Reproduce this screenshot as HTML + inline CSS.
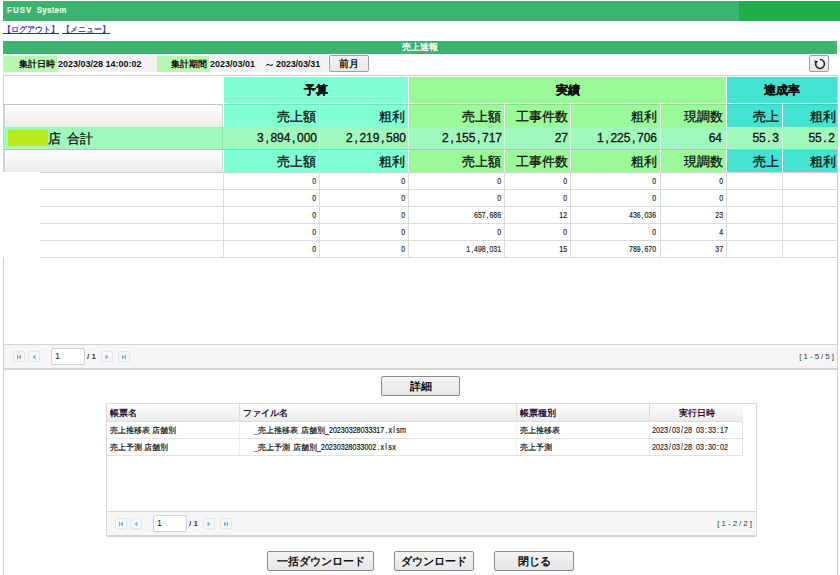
<!DOCTYPE html>
<html><head><meta charset="utf-8"><style>
html,body{margin:0;padding:0;background:#fff;width:840px;height:575px;overflow:hidden;position:relative;font-family:"Liberation Sans",sans-serif;color:#222}
.a{position:absolute;box-sizing:border-box;white-space:nowrap}
.lnk{font-size:8px;color:#2a2acc;text-decoration:underline;-webkit-text-stroke:0.2px #2a2acc}
.lab{background:#b6f7b2;font-size:9px;font-weight:bold;text-align:right;padding-right:2px;color:#111}
.val{font-size:9px;font-weight:bold;padding-left:1px;color:#111;background:#f3f3f3}
.btn{border:1px solid #8c8c8c;border-radius:2px;background:linear-gradient(#f4f4f4,#e6e6e6);font-weight:bold;text-align:center;color:#111}
.hd{font-size:11.5px;font-weight:bold;text-align:center;color:#111;-webkit-text-stroke:0.35px #111}
.sh{font-size:13px;text-align:right;color:#111;-webkit-text-stroke:0.3px #111}

.g{background:linear-gradient(#ffffff,#ebebeb)}
.m{display:inline-block;white-space:nowrap}
.m i{display:inline-block;font-style:normal;text-align:center}
.pb{border:1px solid #e6e6e6;border-radius:2px;background:#f7f7f7}
</style></head><body>
<div class="a " style="left:3px;top:1px;width:834px;height:20px;background:#3cb371"></div>
<div class="a " style="left:739px;top:1px;width:101px;height:20px;background:#22ad4a"></div>
<div class="a " style="left:7px;top:5px;font-size:9px;font-weight:bold;color:#e6ffe6;line-height:11px;-webkit-text-stroke:0.15px #e6ffe6;transform:scaleX(0.88);transform-origin:0 50%"><span style="letter-spacing:1.2px">FUSV</span><span style="margin-left:5px;letter-spacing:0.3px">System</span></div>
<div class="a lnk" style="left:3px;top:25px;line-height:10px">【ログアウト】</div>
<div class="a lnk" style="left:62px;top:25px;line-height:10px">【メニュー】</div>
<div class="a " style="left:3px;top:41px;width:834px;height:13px;background:#3cb371;color:#fff;font-size:9px;font-weight:bold;text-align:center;line-height:13px">売上速報</div>
<div class="a lab" style="left:3px;top:56px;width:54px;height:16px;line-height:16px">集計日時</div>
<div class="a val" style="left:57px;top:56px;width:100px;height:16px;line-height:16px">2023/03/28 14:00:02</div>
<div class="a lab" style="left:157px;top:56px;width:52px;height:16px;line-height:16px">集計期間</div>
<div class="a val" style="left:209px;top:56px;width:53px;height:16px;line-height:16px">2023/03/01</div>
<div class="a val" style="left:262px;top:56px;width:66px;height:16px;line-height:16px;border-left:1px solid #fafafa"><span style="position:absolute;left:1px;top:0;font-weight:normal;font-size:11px;-webkit-text-stroke:0.2px #111">～</span><span style="position:absolute;left:13px;top:0;letter-spacing:-0.1px">2023/03/31</span></div>
<div class="a btn" style="left:329px;top:55px;width:40px;height:17px;font-size:9.5px;line-height:16px;border-color:#a0a0a0">前月</div>
<div class="a btn" style="left:809px;top:55px;width:20px;height:17px;border-color:#a0a0a0"><svg width="20" height="17" viewBox="0 0 20 17" style="position:absolute;left:-1px;top:-1px"><path d="M11 4.6 A4.4 4.4 0 1 1 7.2 6.9" fill="none" stroke="#2a2a2a" stroke-width="1.5"/><path d="M5.2 5.6 L9.2 6.3 L6.3 9.3 Z" fill="#2a2a2a"/></svg></div>
<div class="a " style="left:3px;top:75px;width:835px;height:520px;border:1px solid #cfcfcf;border-bottom:none"></div>
<div class="a " style="left:4px;top:104px;width:219px;height:1px;background:#c4c4c4"></div>
<div class="a g" style="left:4px;top:105px;width:219px;height:22px;border-left:1px solid #d6d6d6;border-right:1px solid #d6d6d6"></div>
<div class="a hd" style="left:224px;top:77px;width:184px;height:26px;background:#80ffd4;line-height:26px">予算</div>
<div class="a hd" style="left:409px;top:77px;width:317px;height:26px;background:#99fa97;line-height:26px">実績</div>
<div class="a hd" style="left:727px;top:77px;width:110px;height:26px;background:#44e2d0;line-height:26px">達成率</div>
<div class="a sh" style="left:224px;top:104px;width:95px;height:23px;background:#80ffd4;line-height:25px;padding-right:3px">売上額</div>
<div class="a sh" style="left:320px;top:104px;width:88px;height:23px;background:#80ffd4;line-height:25px;padding-right:3px">粗利</div>
<div class="a sh" style="left:409px;top:104px;width:95px;height:23px;background:#99fa97;line-height:25px;padding-right:3px">売上額</div>
<div class="a sh" style="left:505px;top:104px;width:65px;height:23px;background:#99fa97;line-height:25px;padding-right:2px">工事件数</div>
<div class="a sh" style="left:571px;top:104px;width:89px;height:23px;background:#99fa97;line-height:25px;padding-right:3px">粗利</div>
<div class="a sh" style="left:661px;top:104px;width:65px;height:23px;background:#99fa97;line-height:25px;padding-right:3px">現調数</div>
<div class="a sh" style="left:727px;top:104px;width:55px;height:23px;background:#44e2d0;line-height:25px;padding-right:3px">売上</div>
<div class="a sh" style="left:783px;top:104px;width:54px;height:23px;background:#44e2d0;line-height:25px;padding-right:1px">粗利</div>
<div class="a sh" style="left:224px;top:150px;width:95px;height:22px;background:#80ffd4;line-height:24px;padding-right:3px">売上額</div>
<div class="a sh" style="left:320px;top:150px;width:88px;height:22px;background:#80ffd4;line-height:24px;padding-right:3px">粗利</div>
<div class="a sh" style="left:409px;top:150px;width:95px;height:22px;background:#99fa97;line-height:24px;padding-right:3px">売上額</div>
<div class="a sh" style="left:505px;top:150px;width:65px;height:22px;background:#99fa97;line-height:24px;padding-right:2px">工事件数</div>
<div class="a sh" style="left:571px;top:150px;width:89px;height:22px;background:#99fa97;line-height:24px;padding-right:3px">粗利</div>
<div class="a sh" style="left:661px;top:150px;width:65px;height:22px;background:#99fa97;line-height:24px;padding-right:3px">現調数</div>
<div class="a sh" style="left:727px;top:150px;width:55px;height:22px;background:#44e2d0;line-height:24px;padding-right:3px">売上</div>
<div class="a sh" style="left:783px;top:150px;width:54px;height:22px;background:#44e2d0;line-height:24px;padding-right:1px">粗利</div>
<div class="a " style="left:224px;top:104px;width:613px;height:1px;background:rgba(0,0,0,0.10)"></div>
<div class="a " style="left:4px;top:127px;width:833px;height:22px;background:#a0f9bc"></div>
<div class="a " style="left:4px;top:149px;width:833px;height:1px;background:#bdbdbd"></div>
<div class="a " style="left:8px;top:130px;width:40px;height:16px;background:#b9ec16"></div>
<div class="a " style="left:319px;top:127px;width:1px;height:22px;background:rgba(255,255,255,0.45)"></div>
<div class="a " style="left:408px;top:127px;width:1px;height:22px;background:rgba(255,255,255,0.45)"></div>
<div class="a " style="left:504px;top:127px;width:1px;height:22px;background:rgba(255,255,255,0.45)"></div>
<div class="a " style="left:570px;top:127px;width:1px;height:22px;background:rgba(255,255,255,0.45)"></div>
<div class="a " style="left:660px;top:127px;width:1px;height:22px;background:rgba(255,255,255,0.45)"></div>
<div class="a " style="left:726px;top:127px;width:1px;height:22px;background:rgba(255,255,255,0.45)"></div>
<div class="a " style="left:782px;top:127px;width:1px;height:22px;background:rgba(255,255,255,0.45)"></div>
<div class="a " style="left:222px;top:127px;width:1px;height:22px;background:rgba(0,0,0,0.08)"></div>
<div class="a " style="left:48px;top:128px;font-size:13px;line-height:22px;color:#111;-webkit-text-stroke:0.3px #111">店<span style="display:inline-block;width:5.5px"></span>合計</div>
<div class="a " style="left:224px;top:127px;width:95px;height:22px;line-height:22px;font-size:12px;text-align:right;color:#111;-webkit-text-stroke:0.3px #111;padding-right:2px"><span class="m" style="font-size:12px;transform:scaleX(1.0);transform-origin:100% 50%;"><i style="width:6.67px">3</i><i style="width:6.67px">,</i><i style="width:6.67px">8</i><i style="width:6.67px">9</i><i style="width:6.67px">4</i><i style="width:6.67px">,</i><i style="width:6.67px">0</i><i style="width:6.67px">0</i><i style="width:6.67px">0</i></span></div>
<div class="a " style="left:320px;top:127px;width:88px;height:22px;line-height:22px;font-size:12px;text-align:right;color:#111;-webkit-text-stroke:0.3px #111;padding-right:2px"><span class="m" style="font-size:12px;transform:scaleX(1.0);transform-origin:100% 50%;"><i style="width:6.67px">2</i><i style="width:6.67px">,</i><i style="width:6.67px">2</i><i style="width:6.67px">1</i><i style="width:6.67px">9</i><i style="width:6.67px">,</i><i style="width:6.67px">5</i><i style="width:6.67px">8</i><i style="width:6.67px">0</i></span></div>
<div class="a " style="left:409px;top:127px;width:95px;height:22px;line-height:22px;font-size:12px;text-align:right;color:#111;-webkit-text-stroke:0.3px #111;padding-right:2px"><span class="m" style="font-size:12px;transform:scaleX(1.0);transform-origin:100% 50%;"><i style="width:6.67px">2</i><i style="width:6.67px">,</i><i style="width:6.67px">1</i><i style="width:6.67px">5</i><i style="width:6.67px">5</i><i style="width:6.67px">,</i><i style="width:6.67px">7</i><i style="width:6.67px">1</i><i style="width:6.67px">7</i></span></div>
<div class="a " style="left:505px;top:127px;width:65px;height:22px;line-height:22px;font-size:12px;text-align:right;color:#111;-webkit-text-stroke:0.3px #111;padding-right:2px"><span class="m" style="font-size:12px;transform:scaleX(1.0);transform-origin:100% 50%;"><i style="width:6.67px">2</i><i style="width:6.67px">7</i></span></div>
<div class="a " style="left:571px;top:127px;width:89px;height:22px;line-height:22px;font-size:12px;text-align:right;color:#111;-webkit-text-stroke:0.3px #111;padding-right:3px"><span class="m" style="font-size:12px;transform:scaleX(1.0);transform-origin:100% 50%;"><i style="width:6.67px">1</i><i style="width:6.67px">,</i><i style="width:6.67px">2</i><i style="width:6.67px">2</i><i style="width:6.67px">5</i><i style="width:6.67px">,</i><i style="width:6.67px">7</i><i style="width:6.67px">0</i><i style="width:6.67px">6</i></span></div>
<div class="a " style="left:661px;top:127px;width:65px;height:22px;line-height:22px;font-size:12px;text-align:right;color:#111;-webkit-text-stroke:0.3px #111;padding-right:4px"><span class="m" style="font-size:12px;transform:scaleX(1.0);transform-origin:100% 50%;"><i style="width:6.67px">6</i><i style="width:6.67px">4</i></span></div>
<div class="a " style="left:727px;top:127px;width:55px;height:22px;line-height:22px;font-size:12px;text-align:right;color:#111;-webkit-text-stroke:0.3px #111;padding-right:3px"><span class="m" style="font-size:12px;transform:scaleX(1.0);transform-origin:100% 50%;"><i style="width:6.67px">5</i><i style="width:6.67px">5</i><i style="width:6.67px">.</i><i style="width:6.67px">3</i></span></div>
<div class="a " style="left:783px;top:127px;width:54px;height:22px;line-height:22px;font-size:12px;text-align:right;color:#111;-webkit-text-stroke:0.3px #111;padding-right:2px"><span class="m" style="font-size:12px;transform:scaleX(1.0);transform-origin:100% 50%;"><i style="width:6.67px">5</i><i style="width:6.67px">5</i><i style="width:6.67px">.</i><i style="width:6.67px">2</i></span></div>
<div class="a g" style="left:4px;top:150px;width:219px;height:22px;border-left:1px solid #d6d6d6;border-right:1px solid #d6d6d6"></div>
<div class="a " style="left:4px;top:172px;width:833px;height:1px;background:#cfcfcf"></div>
<div class="a " style="left:40px;top:189px;width:797px;height:1px;background:#dcdcdc"></div>
<div class="a " style="left:224px;top:173px;width:95px;height:16px;line-height:17px;font-size:9px;text-align:right;padding-right:3px;color:#222;-webkit-text-stroke:0.2px #222"><span class="m" style="font-size:9px;transform:scaleX(0.77);transform-origin:100% 50%;"><i style="width:5px">0</i></span></div>
<div class="a " style="left:320px;top:173px;width:88px;height:16px;line-height:17px;font-size:9px;text-align:right;padding-right:3px;color:#222;-webkit-text-stroke:0.2px #222"><span class="m" style="font-size:9px;transform:scaleX(0.77);transform-origin:100% 50%;"><i style="width:5px">0</i></span></div>
<div class="a " style="left:409px;top:173px;width:95px;height:16px;line-height:17px;font-size:9px;text-align:right;padding-right:3px;color:#222;-webkit-text-stroke:0.2px #222"><span class="m" style="font-size:9px;transform:scaleX(0.77);transform-origin:100% 50%;"><i style="width:5px">0</i></span></div>
<div class="a " style="left:505px;top:173px;width:65px;height:16px;line-height:17px;font-size:9px;text-align:right;padding-right:3px;color:#222;-webkit-text-stroke:0.2px #222"><span class="m" style="font-size:9px;transform:scaleX(0.77);transform-origin:100% 50%;"><i style="width:5px">0</i></span></div>
<div class="a " style="left:571px;top:173px;width:89px;height:16px;line-height:17px;font-size:9px;text-align:right;padding-right:4px;color:#222;-webkit-text-stroke:0.2px #222"><span class="m" style="font-size:9px;transform:scaleX(0.77);transform-origin:100% 50%;"><i style="width:5px">0</i></span></div>
<div class="a " style="left:661px;top:173px;width:65px;height:16px;line-height:17px;font-size:9px;text-align:right;padding-right:3px;color:#222;-webkit-text-stroke:0.2px #222"><span class="m" style="font-size:9px;transform:scaleX(0.77);transform-origin:100% 50%;"><i style="width:5px">0</i></span></div>
<div class="a " style="left:40px;top:206px;width:797px;height:1px;background:#dcdcdc"></div>
<div class="a " style="left:224px;top:190px;width:95px;height:16px;line-height:17px;font-size:9px;text-align:right;padding-right:3px;color:#222;-webkit-text-stroke:0.2px #222"><span class="m" style="font-size:9px;transform:scaleX(0.77);transform-origin:100% 50%;"><i style="width:5px">0</i></span></div>
<div class="a " style="left:320px;top:190px;width:88px;height:16px;line-height:17px;font-size:9px;text-align:right;padding-right:3px;color:#222;-webkit-text-stroke:0.2px #222"><span class="m" style="font-size:9px;transform:scaleX(0.77);transform-origin:100% 50%;"><i style="width:5px">0</i></span></div>
<div class="a " style="left:409px;top:190px;width:95px;height:16px;line-height:17px;font-size:9px;text-align:right;padding-right:3px;color:#222;-webkit-text-stroke:0.2px #222"><span class="m" style="font-size:9px;transform:scaleX(0.77);transform-origin:100% 50%;"><i style="width:5px">0</i></span></div>
<div class="a " style="left:505px;top:190px;width:65px;height:16px;line-height:17px;font-size:9px;text-align:right;padding-right:3px;color:#222;-webkit-text-stroke:0.2px #222"><span class="m" style="font-size:9px;transform:scaleX(0.77);transform-origin:100% 50%;"><i style="width:5px">0</i></span></div>
<div class="a " style="left:571px;top:190px;width:89px;height:16px;line-height:17px;font-size:9px;text-align:right;padding-right:4px;color:#222;-webkit-text-stroke:0.2px #222"><span class="m" style="font-size:9px;transform:scaleX(0.77);transform-origin:100% 50%;"><i style="width:5px">0</i></span></div>
<div class="a " style="left:661px;top:190px;width:65px;height:16px;line-height:17px;font-size:9px;text-align:right;padding-right:3px;color:#222;-webkit-text-stroke:0.2px #222"><span class="m" style="font-size:9px;transform:scaleX(0.77);transform-origin:100% 50%;"><i style="width:5px">0</i></span></div>
<div class="a " style="left:40px;top:223px;width:797px;height:1px;background:#dcdcdc"></div>
<div class="a " style="left:224px;top:207px;width:95px;height:16px;line-height:17px;font-size:9px;text-align:right;padding-right:3px;color:#222;-webkit-text-stroke:0.2px #222"><span class="m" style="font-size:9px;transform:scaleX(0.77);transform-origin:100% 50%;"><i style="width:5px">0</i></span></div>
<div class="a " style="left:320px;top:207px;width:88px;height:16px;line-height:17px;font-size:9px;text-align:right;padding-right:3px;color:#222;-webkit-text-stroke:0.2px #222"><span class="m" style="font-size:9px;transform:scaleX(0.77);transform-origin:100% 50%;"><i style="width:5px">0</i></span></div>
<div class="a " style="left:409px;top:207px;width:95px;height:16px;line-height:17px;font-size:9px;text-align:right;padding-right:3px;color:#222;-webkit-text-stroke:0.2px #222"><span class="m" style="font-size:9px;transform:scaleX(0.77);transform-origin:100% 50%;"><i style="width:5px">6</i><i style="width:5px">5</i><i style="width:5px">7</i><i style="width:5px">,</i><i style="width:5px">6</i><i style="width:5px">8</i><i style="width:5px">6</i></span></div>
<div class="a " style="left:505px;top:207px;width:65px;height:16px;line-height:17px;font-size:9px;text-align:right;padding-right:3px;color:#222;-webkit-text-stroke:0.2px #222"><span class="m" style="font-size:9px;transform:scaleX(0.77);transform-origin:100% 50%;"><i style="width:5px">1</i><i style="width:5px">2</i></span></div>
<div class="a " style="left:571px;top:207px;width:89px;height:16px;line-height:17px;font-size:9px;text-align:right;padding-right:4px;color:#222;-webkit-text-stroke:0.2px #222"><span class="m" style="font-size:9px;transform:scaleX(0.77);transform-origin:100% 50%;"><i style="width:5px">4</i><i style="width:5px">3</i><i style="width:5px">6</i><i style="width:5px">,</i><i style="width:5px">0</i><i style="width:5px">3</i><i style="width:5px">6</i></span></div>
<div class="a " style="left:661px;top:207px;width:65px;height:16px;line-height:17px;font-size:9px;text-align:right;padding-right:3px;color:#222;-webkit-text-stroke:0.2px #222"><span class="m" style="font-size:9px;transform:scaleX(0.77);transform-origin:100% 50%;"><i style="width:5px">2</i><i style="width:5px">3</i></span></div>
<div class="a " style="left:40px;top:240px;width:797px;height:1px;background:#dcdcdc"></div>
<div class="a " style="left:224px;top:224px;width:95px;height:16px;line-height:17px;font-size:9px;text-align:right;padding-right:3px;color:#222;-webkit-text-stroke:0.2px #222"><span class="m" style="font-size:9px;transform:scaleX(0.77);transform-origin:100% 50%;"><i style="width:5px">0</i></span></div>
<div class="a " style="left:320px;top:224px;width:88px;height:16px;line-height:17px;font-size:9px;text-align:right;padding-right:3px;color:#222;-webkit-text-stroke:0.2px #222"><span class="m" style="font-size:9px;transform:scaleX(0.77);transform-origin:100% 50%;"><i style="width:5px">0</i></span></div>
<div class="a " style="left:409px;top:224px;width:95px;height:16px;line-height:17px;font-size:9px;text-align:right;padding-right:3px;color:#222;-webkit-text-stroke:0.2px #222"><span class="m" style="font-size:9px;transform:scaleX(0.77);transform-origin:100% 50%;"><i style="width:5px">0</i></span></div>
<div class="a " style="left:505px;top:224px;width:65px;height:16px;line-height:17px;font-size:9px;text-align:right;padding-right:3px;color:#222;-webkit-text-stroke:0.2px #222"><span class="m" style="font-size:9px;transform:scaleX(0.77);transform-origin:100% 50%;"><i style="width:5px">0</i></span></div>
<div class="a " style="left:571px;top:224px;width:89px;height:16px;line-height:17px;font-size:9px;text-align:right;padding-right:4px;color:#222;-webkit-text-stroke:0.2px #222"><span class="m" style="font-size:9px;transform:scaleX(0.77);transform-origin:100% 50%;"><i style="width:5px">0</i></span></div>
<div class="a " style="left:661px;top:224px;width:65px;height:16px;line-height:17px;font-size:9px;text-align:right;padding-right:3px;color:#222;-webkit-text-stroke:0.2px #222"><span class="m" style="font-size:9px;transform:scaleX(0.77);transform-origin:100% 50%;"><i style="width:5px">4</i></span></div>
<div class="a " style="left:40px;top:257px;width:797px;height:1px;background:#dcdcdc"></div>
<div class="a " style="left:224px;top:241px;width:95px;height:16px;line-height:17px;font-size:9px;text-align:right;padding-right:3px;color:#222;-webkit-text-stroke:0.2px #222"><span class="m" style="font-size:9px;transform:scaleX(0.77);transform-origin:100% 50%;"><i style="width:5px">0</i></span></div>
<div class="a " style="left:320px;top:241px;width:88px;height:16px;line-height:17px;font-size:9px;text-align:right;padding-right:3px;color:#222;-webkit-text-stroke:0.2px #222"><span class="m" style="font-size:9px;transform:scaleX(0.77);transform-origin:100% 50%;"><i style="width:5px">0</i></span></div>
<div class="a " style="left:409px;top:241px;width:95px;height:16px;line-height:17px;font-size:9px;text-align:right;padding-right:3px;color:#222;-webkit-text-stroke:0.2px #222"><span class="m" style="font-size:9px;transform:scaleX(0.77);transform-origin:100% 50%;"><i style="width:5px">1</i><i style="width:5px">,</i><i style="width:5px">4</i><i style="width:5px">9</i><i style="width:5px">8</i><i style="width:5px">,</i><i style="width:5px">0</i><i style="width:5px">3</i><i style="width:5px">1</i></span></div>
<div class="a " style="left:505px;top:241px;width:65px;height:16px;line-height:17px;font-size:9px;text-align:right;padding-right:3px;color:#222;-webkit-text-stroke:0.2px #222"><span class="m" style="font-size:9px;transform:scaleX(0.77);transform-origin:100% 50%;"><i style="width:5px">1</i><i style="width:5px">5</i></span></div>
<div class="a " style="left:571px;top:241px;width:89px;height:16px;line-height:17px;font-size:9px;text-align:right;padding-right:4px;color:#222;-webkit-text-stroke:0.2px #222"><span class="m" style="font-size:9px;transform:scaleX(0.77);transform-origin:100% 50%;"><i style="width:5px">7</i><i style="width:5px">8</i><i style="width:5px">9</i><i style="width:5px">,</i><i style="width:5px">6</i><i style="width:5px">7</i><i style="width:5px">0</i></span></div>
<div class="a " style="left:661px;top:241px;width:65px;height:16px;line-height:17px;font-size:9px;text-align:right;padding-right:3px;color:#222;-webkit-text-stroke:0.2px #222"><span class="m" style="font-size:9px;transform:scaleX(0.77);transform-origin:100% 50%;"><i style="width:5px">3</i><i style="width:5px">7</i></span></div>
<div class="a " style="left:223px;top:172px;width:1px;height:85px;background:#dcdcdc"></div>
<div class="a " style="left:319px;top:172px;width:1px;height:85px;background:#dcdcdc"></div>
<div class="a " style="left:408px;top:172px;width:1px;height:85px;background:#dcdcdc"></div>
<div class="a " style="left:504px;top:172px;width:1px;height:85px;background:#dcdcdc"></div>
<div class="a " style="left:570px;top:172px;width:1px;height:85px;background:#dcdcdc"></div>
<div class="a " style="left:660px;top:172px;width:1px;height:85px;background:#dcdcdc"></div>
<div class="a " style="left:726px;top:172px;width:1px;height:85px;background:#dcdcdc"></div>
<div class="a " style="left:782px;top:172px;width:1px;height:85px;background:#dcdcdc"></div>
<div class="a " style="left:0px;top:172px;width:40px;height:85px;background:#fff"></div>
<div class="a " style="left:4px;top:344px;width:833px;height:26px;background:#f6f6f6;border-top:1px solid #d4d4d4;border-bottom:2px solid #d4d4d4"></div>
<div class="a pb" style="left:13px;top:351px;width:12px;height:11px"><svg width="12" height="11" viewBox="0 0 12 11" style="position:absolute;left:-1px;top:-1px"><path d="M4.5 3.5v5" stroke="#7fb2da" stroke-width="1"/><path d="M8 3.5 L5 6 L8 8.5 Z" fill="#7fb2da"/></svg></div>
<div class="a pb" style="left:28px;top:351px;width:12px;height:11px"><svg width="12" height="11" viewBox="0 0 12 11" style="position:absolute;left:-1px;top:-1px"><path d="M7.5 3.5 L4.5 6 L7.5 8.5 Z" fill="#7fb2da"/></svg></div>
<div class="a " style="left:51px;top:348px;width:34px;height:17px;border:1px solid #d2d2d2;border-radius:2px;background:#fff;font-size:9px;line-height:15px;padding-left:3px;color:#222">1</div>
<div class="a " style="left:87px;top:349px;font-size:8px;font-weight:bold;line-height:15px;color:#503838">/ 1</div>
<div class="a pb" style="left:101px;top:351px;width:12px;height:11px"><svg width="12" height="11" viewBox="0 0 12 11" style="position:absolute;left:-1px;top:-1px"><path d="M4.5 3.5 L7.5 6 L4.5 8.5 Z" fill="#7fb2da"/></svg></div>
<div class="a pb" style="left:118px;top:351px;width:12px;height:11px"><svg width="12" height="11" viewBox="0 0 12 11" style="position:absolute;left:-1px;top:-1px"><path d="M7.5 3.5v5" stroke="#7fb2da" stroke-width="1"/><path d="M4 3.5 L7 6 L4 8.5 Z" fill="#7fb2da"/></svg></div>
<div class="a " style="left:776px;top:349px;width:60px;text-align:right;font-size:8px;line-height:15px;letter-spacing:2px;color:#3a3a3a">[1-5/5]</div>
<div class="a btn" style="left:381px;top:376px;width:79px;height:20px;font-size:11px;line-height:18px">詳細</div>
<div class="a " style="left:106px;top:403px;width:651px;height:133px;border:1px solid #dadada;background:#fff"></div>
<div class="a g" style="left:107px;top:404px;width:636px;height:18px;border-bottom:1px solid #dedede"></div>
<div class="a " style="left:239px;top:404px;width:1px;height:17px;background:#dcdcdc"></div>
<div class="a " style="left:239px;top:421px;width:1px;height:34px;background:#f0f0f0"></div>
<div class="a " style="left:516px;top:404px;width:1px;height:17px;background:#dcdcdc"></div>
<div class="a " style="left:516px;top:421px;width:1px;height:34px;background:#f0f0f0"></div>
<div class="a " style="left:649px;top:404px;width:1px;height:17px;background:#dcdcdc"></div>
<div class="a " style="left:649px;top:421px;width:1px;height:34px;background:#f0f0f0"></div>
<div class="a " style="left:742px;top:421px;width:1px;height:34px;background:#e6e6e6"></div>
<div class="a " style="left:107px;top:405px;width:133px;height:17px;line-height:17px;font-size:8.5px;font-weight:bold;color:#2a1030;text-align:left;padding-left:3px">帳票名</div>
<div class="a " style="left:240px;top:405px;width:277px;height:17px;line-height:17px;font-size:8.5px;font-weight:bold;color:#2a1030;text-align:left;padding-left:3px">ファイル名</div>
<div class="a " style="left:517px;top:405px;width:133px;height:17px;line-height:17px;font-size:8.5px;font-weight:bold;color:#2a1030;text-align:left;padding-left:3px">帳票種別</div>
<div class="a " style="left:650px;top:405px;width:93px;height:17px;line-height:17px;font-size:8.5px;font-weight:bold;color:#2a1030;text-align:center;padding-left:0px">実行日時</div>
<div class="a " style="left:107px;top:438px;width:636px;height:1px;background:#e2e2e2"></div>
<div class="a " style="left:110px;top:422px;line-height:17px;font-size:8px;color:#111;-webkit-text-stroke:0.2px #111">売上推移表 店舗別</div>
<div class="a " style="left:254px;top:422px;line-height:17px;font-size:8px;color:#111;-webkit-text-stroke:0.2px #111">_売上推移表 店舗別<span class="m" style="font-size:9px;transform:scaleX(0.79);transform-origin:0 50%;vertical-align:top"><i style="width:5px">_</i><i style="width:5px">2</i><i style="width:5px">0</i><i style="width:5px">2</i><i style="width:5px">3</i><i style="width:5px">0</i><i style="width:5px">3</i><i style="width:5px">2</i><i style="width:5px">8</i><i style="width:5px">0</i><i style="width:5px">3</i><i style="width:5px">3</i><i style="width:5px">3</i><i style="width:5px">1</i><i style="width:5px">7</i><i style="width:5px">.</i><i style="width:5px">x</i><i style="width:5px">l</i><i style="width:5px">s</i><i style="width:5px">m</i></span></div>
<div class="a " style="left:520px;top:422px;line-height:17px;font-size:8px;color:#111;-webkit-text-stroke:0.2px #111">売上推移表</div>
<div class="a " style="left:652px;top:422px;line-height:17px;font-size:9px;color:#222;-webkit-text-stroke:0.15px #222"><span class="m" style="font-size:9px;transform:scaleX(0.8);transform-origin:0 50%;"><i style="width:5px">2</i><i style="width:5px">0</i><i style="width:5px">2</i><i style="width:5px">3</i><i style="width:5px">/</i><i style="width:5px">0</i><i style="width:5px">3</i><i style="width:5px">/</i><i style="width:5px">2</i><i style="width:5px">8</i><i style="width:5px">&nbsp;</i><i style="width:5px">0</i><i style="width:5px">3</i><i style="width:5px">:</i><i style="width:5px">3</i><i style="width:5px">3</i><i style="width:5px">:</i><i style="width:5px">1</i><i style="width:5px">7</i></span></div>
<div class="a " style="left:107px;top:455px;width:636px;height:1px;background:#e2e2e2"></div>
<div class="a " style="left:110px;top:439px;line-height:17px;font-size:8px;color:#111;-webkit-text-stroke:0.2px #111">売上予測 店舗別</div>
<div class="a " style="left:254px;top:439px;line-height:17px;font-size:8px;color:#111;-webkit-text-stroke:0.2px #111">_売上予測 店舗別<span class="m" style="font-size:9px;transform:scaleX(0.79);transform-origin:0 50%;vertical-align:top"><i style="width:5px">_</i><i style="width:5px">2</i><i style="width:5px">0</i><i style="width:5px">2</i><i style="width:5px">3</i><i style="width:5px">0</i><i style="width:5px">3</i><i style="width:5px">2</i><i style="width:5px">8</i><i style="width:5px">0</i><i style="width:5px">3</i><i style="width:5px">3</i><i style="width:5px">0</i><i style="width:5px">0</i><i style="width:5px">2</i><i style="width:5px">.</i><i style="width:5px">x</i><i style="width:5px">l</i><i style="width:5px">s</i><i style="width:5px">x</i></span></div>
<div class="a " style="left:520px;top:439px;line-height:17px;font-size:8px;color:#111;-webkit-text-stroke:0.2px #111">売上予測</div>
<div class="a " style="left:652px;top:439px;line-height:17px;font-size:9px;color:#222;-webkit-text-stroke:0.15px #222"><span class="m" style="font-size:9px;transform:scaleX(0.8);transform-origin:0 50%;"><i style="width:5px">2</i><i style="width:5px">0</i><i style="width:5px">2</i><i style="width:5px">3</i><i style="width:5px">/</i><i style="width:5px">0</i><i style="width:5px">3</i><i style="width:5px">/</i><i style="width:5px">2</i><i style="width:5px">8</i><i style="width:5px">&nbsp;</i><i style="width:5px">0</i><i style="width:5px">3</i><i style="width:5px">:</i><i style="width:5px">3</i><i style="width:5px">0</i><i style="width:5px">:</i><i style="width:5px">0</i><i style="width:5px">2</i></span></div>
<div class="a " style="left:107px;top:511px;width:649px;height:26px;background:#f6f6f6;border-top:1px solid #d8d8d8;border-bottom:2px solid #d4d4d4"></div>
<div class="a pb" style="left:115px;top:518px;width:12px;height:11px"><svg width="12" height="11" viewBox="0 0 12 11" style="position:absolute;left:-1px;top:-1px"><path d="M4.5 3.5v5" stroke="#7fb2da" stroke-width="1"/><path d="M8 3.5 L5 6 L8 8.5 Z" fill="#7fb2da"/></svg></div>
<div class="a pb" style="left:130px;top:518px;width:12px;height:11px"><svg width="12" height="11" viewBox="0 0 12 11" style="position:absolute;left:-1px;top:-1px"><path d="M7.5 3.5 L4.5 6 L7.5 8.5 Z" fill="#7fb2da"/></svg></div>
<div class="a " style="left:153px;top:515px;width:34px;height:17px;border:1px solid #d2d2d2;border-radius:2px;background:#fff;font-size:9px;line-height:15px;padding-left:3px;color:#222">1</div>
<div class="a " style="left:189px;top:516px;font-size:8px;font-weight:bold;line-height:15px;color:#503838">/ 1</div>
<div class="a pb" style="left:203px;top:518px;width:12px;height:11px"><svg width="12" height="11" viewBox="0 0 12 11" style="position:absolute;left:-1px;top:-1px"><path d="M4.5 3.5 L7.5 6 L4.5 8.5 Z" fill="#7fb2da"/></svg></div>
<div class="a pb" style="left:220px;top:518px;width:12px;height:11px"><svg width="12" height="11" viewBox="0 0 12 11" style="position:absolute;left:-1px;top:-1px"><path d="M7.5 3.5v5" stroke="#7fb2da" stroke-width="1"/><path d="M4 3.5 L7 6 L4 8.5 Z" fill="#7fb2da"/></svg></div>
<div class="a " style="left:694px;top:516px;width:60px;text-align:right;font-size:8px;line-height:15px;letter-spacing:2px;color:#3a3a3a">[1-2/2]</div>
<div class="a btn" style="left:267px;top:551px;width:107px;height:20px;font-size:11px;line-height:18px">一括ダウンロード</div>
<div class="a btn" style="left:394px;top:551px;width:80px;height:20px;font-size:11px;line-height:18px">ダウンロード</div>
<div class="a btn" style="left:494px;top:551px;width:80px;height:20px;font-size:11px;line-height:18px">閉じる</div>
</body></html>
